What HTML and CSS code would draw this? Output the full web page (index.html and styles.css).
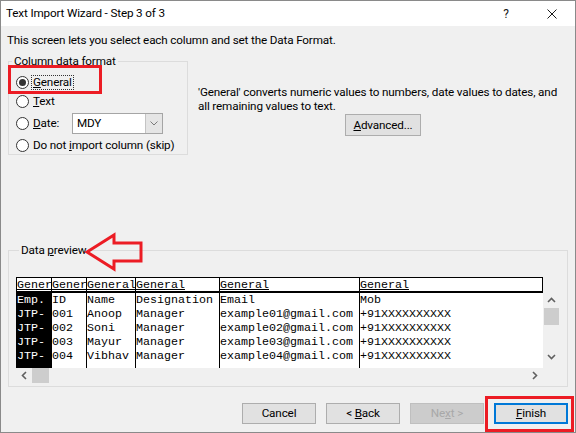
FILE: index.html
```html
<!DOCTYPE html>
<html>
<head>
<meta charset="utf-8">
<link rel="stylesheet" href="styles.css">
</head>
<body>
<div class="window">
  <div class="titlebar">
    <span class="title">Text Import Wizard - Step 3 of 3</span>
    <span class="tb-btn">?</span>
    <span class="tb-btn"><svg width="10" height="10" viewBox="0 0 10 10"><path d="M0.5 0.5 L9.5 9.5 M9.5 0.5 L0.5 9.5" stroke="#1a1a1a" stroke-width="1" fill="none"/></svg></span>
  </div>
  <div class="content">
    <p class="intro">This screen lets you select each column and set the Data Format.</p>
    <div class="top">
      <fieldset class="group format">
        <legend>Column data format</legend>
        <div class="radio first"><span class="circle checked"></span><span class="lbl focus"><u>G</u>eneral</span></div>
        <div class="radio"><span class="circle"></span><span class="lbl"><u>T</u>ext</span></div>
        <div class="radio date"><span class="circle"></span><span class="lbl datelbl"><u>D</u>ate:</span>
          <div class="combo"><span class="combo-val">MDY</span><span class="combo-drop"><svg width="8" height="5" viewBox="0 0 8 5"><path d="M0.5 0.5 L4 4 L7.5 0.5" stroke="#7a7a7a" stroke-width="1" fill="none"/></svg></span></div>
        </div>
        <div class="radio"><span class="circle"></span><span class="lbl">Do not <u>i</u>mport column (skip)</span></div>
      </fieldset>
      <div class="desc">
        <p class="desc-text">'General' converts numeric values to numbers, date values to dates, and<br>all remaining values to text.</p>
        <button class="btn adv"><u>A</u>dvanced...</button>
      </div>
    </div>
    <fieldset class="group preview">
      <legend>Data <u>p</u>review</legend>
      <div class="preview-box">
        <div class="prow">
          <div class="table">
            <div class="col c1"><div class="hd">Gener</div><div class="bd">Emp.<br>JTP-<br>JTP-<br>JTP-<br>JTP-</div></div>
            <div class="col c2"><div class="hd">Gener</div><div class="bd">ID<br>001<br>002<br>003<br>004</div></div>
            <div class="col c3"><div class="hd">General</div><div class="bd">Name<br>Anoop<br>Soni<br>Mayur<br>Vibhav</div></div>
            <div class="col c4"><div class="hd">General</div><div class="bd">Designation<br>Manager<br>Manager<br>Manager<br>Manager</div></div>
            <div class="col c5"><div class="hd">General</div><div class="bd">Email<br>example01@gmail.com<br>example02@gmail.com<br>example03@gmail.com<br>example04@gmail.com</div></div>
            <div class="col c6"><div class="hd">General</div><div class="bd">Mob<br>+91XXXXXXXXXX<br>+91XXXXXXXXXX<br>+91XXXXXXXXXX<br>+91XXXXXXXXXX</div></div>
          </div>
          <div class="vscroll">
            <div class="vs-top"></div>
            <div class="arrow-cell v"><svg width="9" height="6" viewBox="0 0 9 6"><path d="M1 5 L4.5 1.5 L8 5" stroke="#606060" stroke-width="1.6" fill="none"/></svg></div>
            <div class="vthumb"></div>
            <div class="spacer"></div>
            <div class="arrow-cell v"><svg width="9" height="6" viewBox="0 0 9 6"><path d="M1 1 L4.5 4.5 L8 1" stroke="#606060" stroke-width="1.6" fill="none"/></svg></div>
            <div class="vs-bottom"></div>
          </div>
        </div>
        <div class="hscroll">
          <div class="arrow-cell h"><svg width="6" height="9" viewBox="0 0 6 9"><path d="M5 1 L1.5 4.5 L5 8" stroke="#606060" stroke-width="1.6" fill="none"/></svg></div>
          <div class="hthumb"></div>
          <div class="spacer"></div>
          <div class="arrow-cell h"><svg width="6" height="9" viewBox="0 0 6 9"><path d="M1 1 L4.5 4.5 L1 8" stroke="#606060" stroke-width="1.6" fill="none"/></svg></div>
        </div>
      </div>
    </fieldset>
    <div class="buttons">
      <button class="btn">Cancel</button>
      <button class="btn">&lt; <u>B</u>ack</button>
      <button class="btn disabled">Ne<u>x</u>t &gt;</button>
      <button class="btn default"><u>F</u>inish</button>
    </div>
  </div>
  <div class="mark mark-general"></div>
  <svg class="mark-arrow" width="66" height="44" viewBox="0 0 66 44"><polygon points="7,22 34,5 34,13 61,13 61,31 34,31 34,39" fill="none" stroke="#ec1c24" stroke-width="3" stroke-linejoin="miter"/></svg>
  <div class="mark mark-finish"></div>
</div>
</body>
</html>
```
FILE: styles.css
```css
* { box-sizing: border-box; }
html, body { margin: 0; padding: 0; }
body {
  width: 576px;
  height: 433px;
  overflow: hidden;
  background: #f0f0f0;
  font-family: Roboto, "Noto Sans", sans-serif;
  font-size: 11.7px;
  letter-spacing: -0.15px;
  color: #000;
}
.window {
  position: relative;
  width: 576px;
  height: 433px;
  border: 1px solid #8a8a8a;
  background: #f0f0f0;
  display: flex;
  flex-direction: column;
}
.titlebar {
  height: 25px;
  background: #fff;
  display: flex;
  align-items: center;
  padding-left: 5px;
  flex-shrink: 0;
}
.title { flex: 1; line-height: 15px; }
.tb-btn {
  width: 46px;
  height: 25px;
  display: flex;
  align-items: center;
  justify-content: center;
  color: #1a1a1a;
  font-size: 12px;
}
.content {
  padding: 7px 7px 0 7px;
  display: flex;
  flex-direction: column;
}
.intro {
  margin: 0 0 0 -1px;
  line-height: 15px;
}
.top {
  display: flex;
  margin-top: 6px;
  align-items: flex-start;
}
.group {
  margin: 0;
  padding: 0;
  border: 1px solid #dcdcdc;
  min-width: 0;
}
.group legend {
  margin-left: 3px;
  padding: 0 2px;
  line-height: 15px;
}
.format {
  width: 180px;
  flex-shrink: 0;
  padding-bottom: 1px;
}
.radio {
  display: flex;
  align-items: center;
  height: 16px;
  margin-left: 7px;
  margin-top: 3px;
  white-space: nowrap;
}
.radio.first { margin-top: 5px; }
.radio.date { height: 22px; }
.circle {
  width: 13px;
  height: 13px;
  border: 1px solid #333;
  border-radius: 50%;
  background: #fff;
  margin-right: 2px;
  display: flex;
  align-items: center;
  justify-content: center;
  flex-shrink: 0;
}
.circle.checked::after {
  content: "";
  width: 7px;
  height: 7px;
  border-radius: 50%;
  background: #333;
}
.lbl {
  border: 1px dotted transparent;
  padding: 0 1px;
  line-height: 13px;
  height: 15px;
}
.lbl.focus { border-color: #333; }
.datelbl { width: 41px; }
.combo {
  width: 91px;
  height: 21px;
  border: 1px solid #a5a5a5;
  background: #fff;
  display: flex;
  align-items: stretch;
}
.combo-val {
  flex: 1;
  padding-left: 4px;
  line-height: 19px;
}
.combo-drop {
  width: 17px;
  background: #e5e5e5;
  border-left: 1px solid #c4c4c4;
  display: flex;
  align-items: center;
  justify-content: center;
}
.desc {
  flex: 1;
  min-width: 0;
  margin-left: 10px;
  margin-top: 31px;
}
.desc-text {
  margin: 0;
  line-height: 14px;
  white-space: nowrap;
}
.btn {
  font-family: inherit;
  font-size: 11.7px;
  letter-spacing: -0.15px;
  color: #000;
  background: #e1e1e1;
  border: 1px solid #adadad;
  padding: 0;
  height: 21px;
  width: 74px;
  line-height: 17px;
}
.adv {
  display: block;
  width: 76px;
  height: 22px;
  margin: 1px auto 0;
}
.preview {
  margin-top: 88px;
  padding: 0 6px 1px 7px;
}
.preview-box {
  margin-top: 19px;
  width: 545px;
  display: flex;
  flex-direction: column;
}
.prow {
  display: flex;
  height: 91px;
}
.table {
  width: 527px;
  display: flex;
  font-family: "Liberation Mono", "DejaVu Sans Mono", monospace;
  font-size: 11.67px;
  letter-spacing: 0;
}
.col {
  display: flex;
  flex-direction: column;
  border-left: 1px solid #000;
  overflow: hidden;
  white-space: nowrap;
}
.c1 { width: 35px; }
.c2 { width: 35px; }
.c3 { width: 49px; }
.c4 { width: 84px; }
.c5 { width: 140px; }
.c6 { flex: 1; }
.hd {
  height: 16px;
  line-height: 14px;
  border-top: 1px solid #000;
  border-bottom: 2px solid #000;
  background: #fff;
  text-decoration: underline;
  overflow: hidden;
}
.c6 .hd { border-right: 1px solid #000; }
.bd {
  flex: 1;
  background: #fff;
  line-height: 14px;
  overflow: hidden;
}
.c1 .bd {
  background: #000;
  color: #fff;
}
.vscroll {
  width: 18px;
  display: flex;
  flex-direction: column;
}
.vs-top { height: 16px; }
.vs-bottom { height: 4px; }
.arrow-cell {
  display: flex;
  align-items: center;
  justify-content: center;
}
.arrow-cell.v { height: 14px; width: 17px; }
.arrow-cell.h { width: 15px; height: 15px; }
.vthumb {
  margin-top: 1px;
  margin-left: 1px;
  width: 15px;
  height: 17px;
  background: #cdcdcd;
}
.spacer { flex: 1; }
.hscroll {
  width: 527px;
  height: 17px;
  display: flex;
  align-items: flex-start;
  padding-right: 1px;
}
.hthumb {
  margin-left: 1px;
  width: 17px;
  height: 15px;
  background: #cdcdcd;
}
.buttons {
  display: flex;
  justify-content: flex-end;
  gap: 10px;
  margin-top: 16px;
}
.btn.disabled {
  background: #cccccc;
  border-color: #bfbfbf;
  color: #a8a8a8;
}
.btn.default {
  border: 2px solid #0078d7;
}
.mark {
  position: absolute;
  border: 3px solid #ec1c24;
}
.mark-general {
  left: 7px;
  top: 64px;
  width: 94px;
  height: 29px;
}
.mark-finish {
  left: 484px;
  top: 395px;
  width: 89px;
  height: 36px;
}
.mark-arrow {
  position: absolute;
  left: 79px;
  top: 229px;
}
```
